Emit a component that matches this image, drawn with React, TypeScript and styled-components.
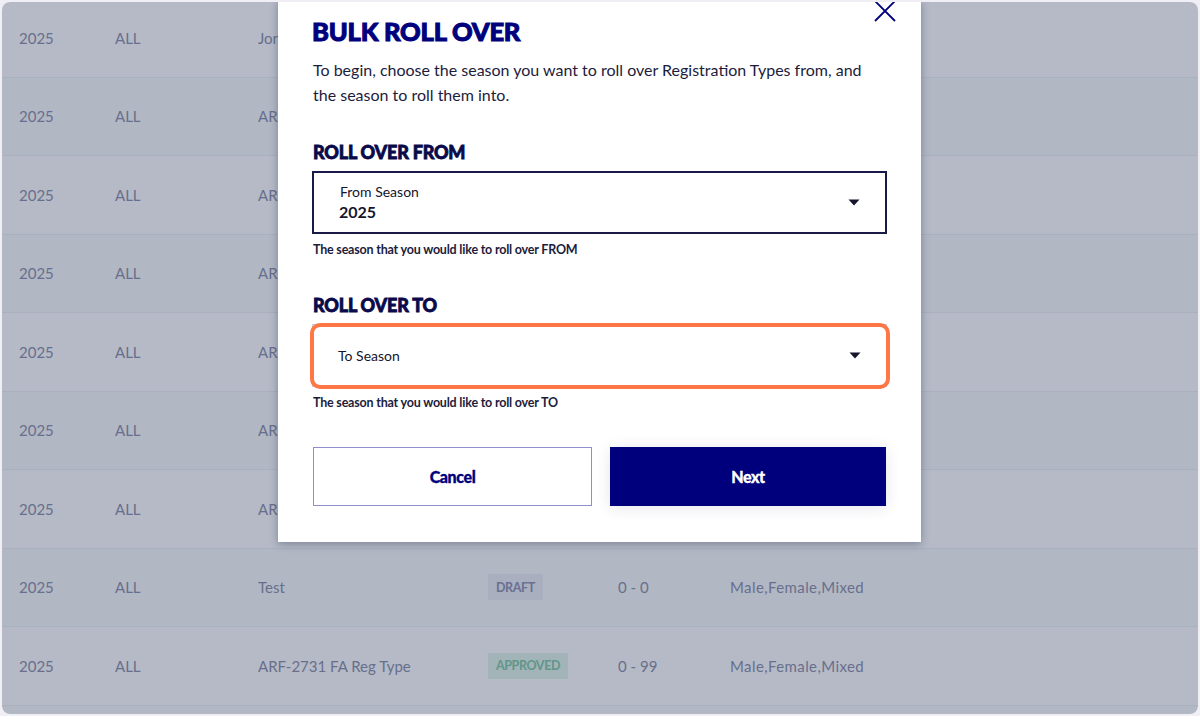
import React from "react";
import styled, { createGlobalStyle } from "styled-components";

const GlobalStyle = createGlobalStyle`
  html, body {
    margin: 0;
    padding: 0;
    background: #f0eff5;
    font-family: "Lato", "Liberation Sans", sans-serif;
  }
  * { box-sizing: border-box; }
`;

const Frame = styled.div`
  position: relative;
  margin: 2px;
  width: 1196px;
  height: 712px;
  border-radius: 8px;
  overflow: hidden;
  background: #ffffff;
`;

const Table = styled.div`
  margin-top: -3px;
  display: flex;
  flex-direction: column;
`;

const Row = styled.div<{ $striped?: boolean }>`
  display: grid;
  grid-template-columns: 96px 143px 230px 130px 112px 1fr;
  align-items: center;
  height: 78.5px;
  padding-left: 17px;
  border-bottom: 1px solid #eef0f4;
  background: ${(p) => (p.$striped ? "#fbfbfd" : "#ffffff")};
  font-size: 15px;
  color: #8d90aa;
`;

const Cell = styled.div`
  white-space: nowrap;
  overflow: hidden;
`;

const Gender = styled(Cell)`
  letter-spacing: 0.4px;
`;

const Badge = styled.span<{ $tone: "draft" | "approved" }>`
  display: inline-flex;
  align-items: center;
  height: 26px;
  padding: 0 8px;
  font-size: 12.5px;
  font-weight: 700;
  letter-spacing: -0.4px;
  text-transform: uppercase;
  background: ${(p) => (p.$tone === "approved" ? "#e3f6ea" : "#edeff3")};
  color: ${(p) => (p.$tone === "approved" ? "#82c9a4" : "#8e91b0")};
`;

const Overlay = styled.div`
  position: absolute;
  inset: 0;
  background: rgba(31, 46, 82, 0.33);
`;

const Modal = styled.div`
  position: absolute;
  left: 276px;
  top: -2px;
  width: 643px;
  background: #ffffff;
  padding: 16px 34px 36px 34px;
  box-shadow: 0 2px 8px rgba(20, 30, 60, 0.35);
`;

const Close = styled.button`
  position: absolute;
  top: 2px;
  right: 24px;
  width: 24px;
  height: 20px;
  padding: 0;
  border: none;
  background: none;
  display: flex;
  align-items: flex-end;
  justify-content: center;
`;

const Title = styled.h1`
  margin: 0;
  font-family: "Lato", sans-serif;
  font-weight: 900;
  font-size: 25.5px;
  line-height: 30px;
  letter-spacing: -0.2px;
  color: #00007d;
  -webkit-text-stroke: 1px #00007d;
`;

const Description = styled.p`
  margin: 11px 0 0 1px;
  font-size: 16px;
  line-height: 25px;
  color: #1c1c3c;
`;

const SectionTitle = styled.h2<{ $first?: boolean }>`
  margin: ${(p) => (p.$first ? "34px" : "36px")} 0 0 1px;
  font-weight: 900;
  font-size: 18px;
  line-height: 22px;
  letter-spacing: -0.2px;
  color: #0a0a4a;
  -webkit-text-stroke: 0.8px #0a0a4a;
`;

const SelectWrap = styled.div`
  position: relative;
  margin-top: 8px;
`;

const SelectBox = styled.div<{ $active?: boolean }>`
  display: flex;
  align-items: center;
  justify-content: space-between;
  height: 63px;
  padding: 0 25px 0 25px;
  border: ${(p) => (p.$active ? "2px solid #1a1a48" : "1px solid #c9cad6")};
  background: #ffffff;
`;

const SelectText = styled.div`
  display: flex;
  flex-direction: column;
  gap: 1px;
`;

const SelectLabel = styled.span<{ $small?: boolean }>`
  font-size: 14px;
  line-height: 18px;
  color: #15152e;
  margin-left: ${(p) => (p.$small ? "0" : "1px")};
`;

const SelectValue = styled.span`
  font-size: 16px;
  font-weight: 700;
  line-height: 20px;
  color: #15152e;
`;

const Highlight = styled.div`
  position: absolute;
  top: -1px;
  left: -2px;
  right: -3px;
  bottom: -2px;
  border: 4px solid #ff7745;
  border-radius: 10px;
  pointer-events: none;
`;

const Helper = styled.div`
  margin: 8px 0 0 1px;
  font-size: 12.5px;
  font-weight: 700;
  letter-spacing: -0.2px;
  line-height: 16px;
  color: #1c1c3c;
`;

const Actions = styled.div`
  display: grid;
  grid-template-columns: 279px 276px;
  column-gap: 18px;
  margin: 36px 0 0 1px;
`;

const Button = styled.button<{ $primary?: boolean }>`
  height: 59px;
  font-family: "Lato", sans-serif;
  font-size: 16px;
  font-weight: 900;
  letter-spacing: -0.4px;
  cursor: pointer;
  border: 1px solid ${(p) => (p.$primary ? "#00007d" : "#8f8fcc")};
  background: ${(p) => (p.$primary ? "#00007d" : "#ffffff")};
  color: ${(p) => (p.$primary ? "#ffffff" : "#00007d")};
  -webkit-text-stroke: 0.3px ${(p) => (p.$primary ? "#ffffff" : "#00007d")};
  box-shadow: ${(p) =>
    p.$primary ? "0 2px 14px rgba(40, 50, 110, 0.12)" : "none"};
`;

const Caret = () => (
  <svg width="12" height="7" viewBox="0 0 12 7">
    <path d="M0.5 0.5 H11.5 L6 6.5 Z" fill="#15152e" />
  </svg>
);

type RowData = {
  year: string;
  scope: string;
  name: string;
  status?: "draft" | "approved";
  age?: string;
  gender?: string;
};

const rows: RowData[] = [
  { year: "2025", scope: "ALL", name: "Jones Test Type", status: "draft", age: "0 - 0", gender: "Male,Female,Mixed" },
  { year: "2025", scope: "ALL", name: "ARF-2731 Reg Type", status: "approved", age: "0 - 99", gender: "Male,Female,Mixed" },
  { year: "2025", scope: "ALL", name: "ARF-2731 Reg Type", status: "approved", age: "0 - 99", gender: "Male,Female,Mixed" },
  { year: "2025", scope: "ALL", name: "ARF-2731 Reg Type", status: "approved", age: "0 - 99", gender: "Male,Female,Mixed" },
  { year: "2025", scope: "ALL", name: "ARF-2731 Reg Type", status: "approved", age: "0 - 99", gender: "Male,Female,Mixed" },
  { year: "2025", scope: "ALL", name: "ARF-2731 Reg Type", status: "approved", age: "0 - 99", gender: "Male,Female,Mixed" },
  { year: "2025", scope: "ALL", name: "ARF-2731 Reg Type", status: "approved", age: "0 - 99", gender: "Male,Female,Mixed" },
  { year: "2025", scope: "ALL", name: "Test", status: "draft", age: "0 - 0", gender: "Male,Female,Mixed" },
  { year: "2025", scope: "ALL", name: "ARF-2731 FA Reg Type", status: "approved", age: "0 - 99", gender: "Male,Female,Mixed" },
  { year: "", scope: "", name: "" },
];

export default function App() {
  return (
    <>
      <GlobalStyle />
      <Frame>
        <Table>
          {rows.map((r, i) => (
            <Row key={i} $striped={i % 2 === 1}>
              <Cell>{r.year}</Cell>
              <Cell>{r.scope}</Cell>
              <Cell>{r.name}</Cell>
              <Cell>{r.status && <Badge $tone={r.status}>{r.status}</Badge>}</Cell>
              <Cell>{r.age}</Cell>
              <Gender>{r.gender}</Gender>
            </Row>
          ))}
        </Table>
        <Overlay />
        <Modal>
          <Close aria-label="Close">
            <svg width="22" height="22" viewBox="0 0 22 22">
              <path d="M1 1 L21 21 M21 1 L1 21" stroke="#00007d" strokeWidth="1.8" />
            </svg>
          </Close>
          <Title>BULK ROLL OVER</Title>
          <Description>
            To begin, choose the season you want to roll over Registration Types from, and
            the season to roll them into.
          </Description>

          <SectionTitle $first>ROLL OVER FROM</SectionTitle>
          <SelectWrap>
            <SelectBox $active>
              <SelectText>
                <SelectLabel>From Season</SelectLabel>
                <SelectValue>2025</SelectValue>
              </SelectText>
              <Caret />
            </SelectBox>
          </SelectWrap>
          <Helper>The season that you would like to roll over FROM</Helper>

          <SectionTitle>ROLL OVER TO</SectionTitle>
          <SelectWrap>
            <SelectBox>
              <SelectLabel $small>To Season</SelectLabel>
              <Caret />
            </SelectBox>
            <Highlight />
          </SelectWrap>
          <Helper>The season that you would like to roll over TO</Helper>

          <Actions>
            <Button>Cancel</Button>
            <Button $primary>Next</Button>
          </Actions>
        </Modal>
      </Frame>
    </>
  );
}
